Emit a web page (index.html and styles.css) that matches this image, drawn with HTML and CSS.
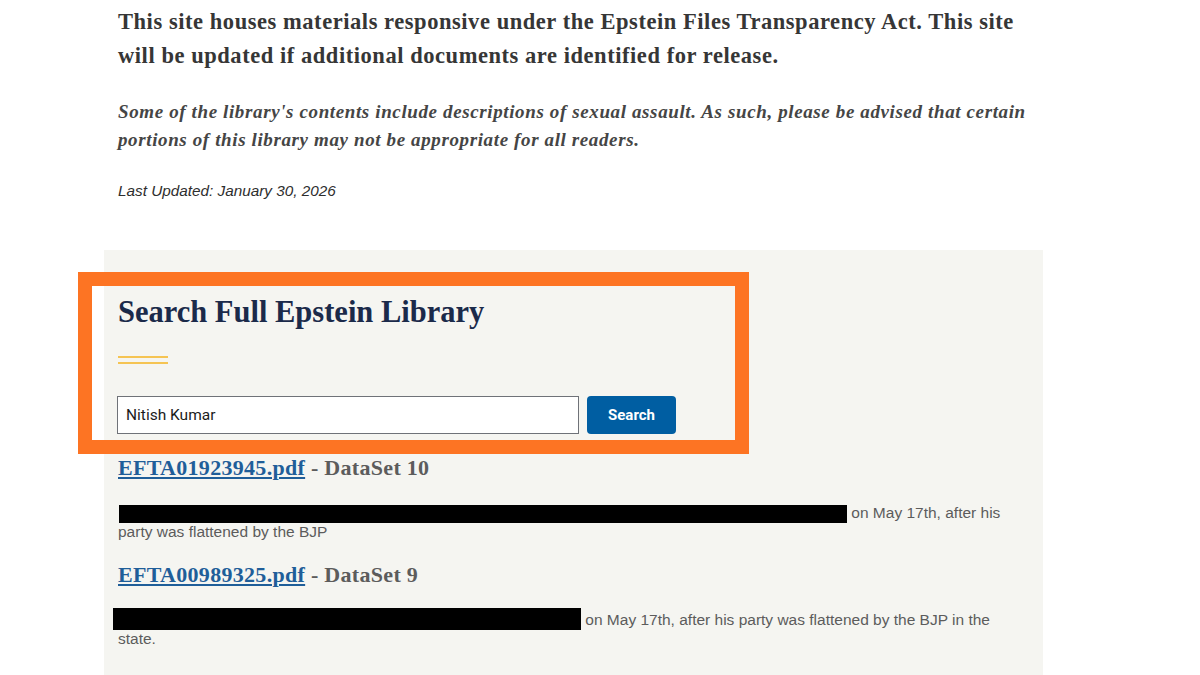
FILE: index.html
```html
<!DOCTYPE html>
<html lang="en">
<head>
<meta charset="utf-8">
<title>Epstein Library</title>
<link rel="stylesheet" href="styles.css">
</head>
<body>
<main class="page">
  <section class="intro">
    <p class="lead">This site houses materials responsive under the Epstein Files Transparency Act. This site will be updated if additional documents are identified for release.</p>
    <p class="warning">Some of the library's contents include descriptions of sexual assault. As such, please be advised that certain portions of this library may not be appropriate for all readers.</p>
    <p class="updated">Last Updated: January 30, 2026</p>
  </section>
  <section class="panel">
    <div class="highlight"></div>
    <h2 class="panel-title">Search Full Epstein Library</h2>
    <div class="rule"><span></span><span></span></div>
    <form class="search-form">
      <input class="search-input" type="text" value="Nitish Kumar">
      <button class="search-btn" type="button">Search</button>
    </form>
    <ul class="results">
      <li class="result">
        <h3 class="result-title"><a href="#">EFTA01923945.pdf</a> - DataSet 10</h3>
        <p class="result-text"><span class="redact redact-a"></span> on May 17th, after his party was flattened by the BJP</p>
      </li>
      <li class="result">
        <h3 class="result-title"><a href="#">EFTA00989325.pdf</a> - DataSet 9</h3>
        <p class="result-text"><span class="redact redact-b"></span> on May 17th, after his party was flattened by the BJP in the state.</p>
      </li>
    </ul>
  </section>
</main>
</body>
</html>
```
FILE: styles.css
```css
html, body {
  margin: 0;
  padding: 0;
  background: #ffffff;
}
body {
  font-family: "Liberation Sans", Arial, sans-serif;
  color: #333;
}
.page {
  margin-left: 104px;
  width: 939px;
}
.intro {
  padding: 5px 14px 0 14px;
}
.intro p {
  margin: 0;
}
.lead {
  font-family: "Liberation Serif", "Times New Roman", serif;
  font-weight: 700;
  font-size: 22.5px;
  letter-spacing: 0.55px;
  line-height: 34px;
  color: #363636;
}
.warning {
  margin-top: 25px !important;
  font-family: "Liberation Serif", "Times New Roman", serif;
  font-style: italic;
  font-weight: 700;
  font-size: 19px;
  letter-spacing: 0.62px;
  line-height: 28px;
  color: #454545;
}
.updated {
  margin-top: 26px !important;
  font-style: italic;
  font-size: 15.3px;
  line-height: 22px;
  color: #2e2e2e;
}
.panel {
  position: relative;
  margin-top: 48px;
  background: #f5f5f1;
  padding: 44px 14px 30px 14px;
}
.highlight {
  position: absolute;
  left: -26px;
  top: 22px;
  width: 643px;
  height: 154px;
  border: 14px solid #fd7423;
  pointer-events: none;
}
.panel-title {
  margin: 0;
  font-family: "Liberation Serif", "Times New Roman", serif;
  font-weight: 700;
  font-size: 30.5px;
  line-height: 36px;
  color: #1b2a4a;
}
.rule {
  margin-top: 26px;
  width: 50px;
  display: flex;
  flex-direction: column;
  gap: 4px;
}
.rule span {
  display: block;
  height: 2px;
  background: #f5c453;
}
.search-form {
  margin-top: 32px;
  display: flex;
  gap: 8px;
  margin-left: -1px;
}
.search-input {
  box-sizing: border-box;
  width: 462px;
  height: 38px;
  border: 1px solid #6f7278;
  background: #fff;
  padding: 0 8px;
  font-family: Roboto, "Liberation Sans", sans-serif;
  font-size: 15.5px;
  color: #1b1b1b;
  margin: 0;
  border-radius: 0;
}
.search-btn {
  box-sizing: border-box;
  width: 89px;
  height: 38px;
  border: none;
  border-radius: 4px;
  background: #005ea2;
  color: #fff;
  font-family: Roboto, "Liberation Sans", sans-serif;
  font-weight: 700;
  font-size: 15px;
  margin: 0;
  padding: 0;
}
.results {
  list-style: none;
  margin: 21px 0 0 0;
  padding: 0;
}
.result + .result {
  margin-top: 21px;
}
.result-title {
  margin: 0;
  font-family: "Liberation Serif", "Times New Roman", serif;
  font-weight: 700;
  font-size: 22px;
  letter-spacing: 0.3px;
  line-height: 26px;
  color: #5c5c5c;
}
.result-title a {
  color: #1f5e99;
  text-decoration: underline;
  text-underline-offset: 2px;
}
.result-text {
  margin: 23px 0 0 0;
  font-size: 15.5px;
  line-height: 18px;
  color: #5c5c5c;
}
.redact {
  display: inline-block;
  background: #000;
  vertical-align: middle;
}
.redact-a {
  width: 728px;
  height: 18px;
  margin-left: 1px;
}
.redact-b {
  width: 468px;
  height: 22px;
  margin: -4px 0 0 -5px;
}
```
